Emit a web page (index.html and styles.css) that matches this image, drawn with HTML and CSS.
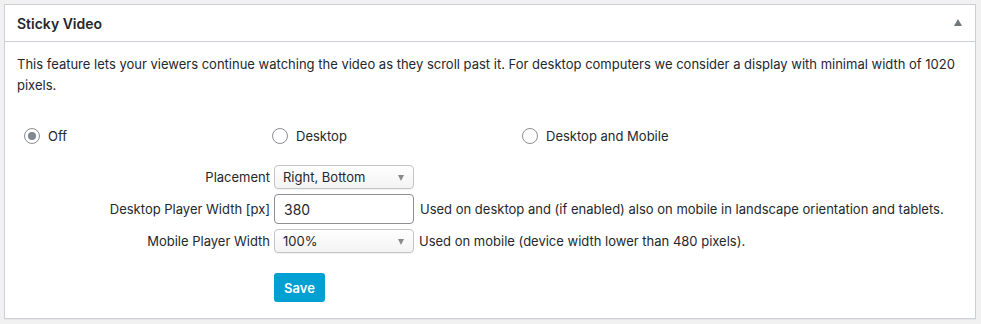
FILE: index.html
```html
<!DOCTYPE html>
<html>
<head>
<meta charset="utf-8">
<link rel="stylesheet" href="styles.css">
</head>
<body>
<div class="postbox">
  <div class="postbox-header">
    <h2 class="postbox-title">Sticky Video</h2>
    <span class="toggle-arrow"></span>
  </div>
  <div class="inside">
    <p class="intro">This feature lets your viewers continue watching the video as they scroll past it. For desktop computers we consider a display with minimal width of 1020 pixels.</p>
    <div class="radio-row">
      <label class="radio-opt"><span class="radio checked"></span>Off</label>
      <label class="radio-opt"><span class="radio"></span>Desktop</label>
      <label class="radio-opt"><span class="radio"></span>Desktop and Mobile</label>
    </div>
    <div class="form-grid">
      <span class="field-label">Placement</span>
      <span class="fake-select">Right, Bottom<span class="caret"></span></span>
      <span class="field-desc"></span>

      <span class="field-label">Desktop Player Width [px]</span>
      <span class="fake-input">380</span>
      <span class="field-desc desc-input">Used on desktop and (if enabled) also on mobile in landscape orientation and tablets.</span>

      <span class="field-label">Mobile Player Width</span>
      <span class="fake-select">100%<span class="caret"></span></span>
      <span class="field-desc">Used on mobile (device width lower than 480 pixels).</span>
    </div>
    <div class="actions">
      <button class="btn-save">Save</button>
    </div>
  </div>
</div>
</body>
</html>
```
FILE: styles.css
```css
html, body {
  margin: 0;
  padding: 0;
  background: #f1f1f1;
}
body {
  padding: 4px 5px 5px 4px;
  font-family: Inter, "Noto Sans", sans-serif;
  font-size: 13px;
  color: #23282d;
}
.postbox {
  background: #fff;
  border: 1px solid #ccd0d4;
  box-shadow: 0 1px 1px rgba(0,0,0,0.04);
  height: 315px;
  box-sizing: border-box;
}
.postbox-header {
  height: 36px;
  border-bottom: 1px solid #ccd0d4;
  display: flex;
  align-items: center;
  justify-content: space-between;
  padding: 0 13px 0 12px;
}
.postbox-title {
  margin: 0;
  font-size: 14px;
  font-weight: 600;
  color: #23282d;
}
.toggle-arrow {
  width: 0;
  height: 0;
  border-left: 4px solid transparent;
  border-right: 4px solid transparent;
  border-bottom: 7px solid #72777c;
  margin-top: -1px;
}
.inside {
  padding: 0 12px;
}
.intro {
  margin: 12px 0 0;
  line-height: 21px;
}
.radio-row {
  display: grid;
  grid-template-columns: 248px 250px auto;
  margin-top: 30px;
  padding-left: 7px;
}
.radio-opt {
  display: flex;
  align-items: center;
  gap: 8px;
  height: 20px;
}
.radio {
  width: 14px;
  height: 14px;
  border: 1px solid #8c8f94;
  border-radius: 50%;
  box-sizing: content-box;
  display: flex;
  align-items: center;
  justify-content: center;
  background: #fff;
}
.radio.checked::after {
  content: "";
  width: 8px;
  height: 8px;
  border-radius: 50%;
  background: #7e8993;
}
.form-grid {
  display: grid;
  grid-template-columns: 253px 140px auto;
  column-gap: 4px;
  row-gap: 5px;
  margin-top: 19px;
  align-items: center;
}
.field-label {
  text-align: right;
  white-space: nowrap;
}
.fake-select {
  position: relative;
  height: 24px;
  box-sizing: border-box;
  border: 1px solid #c3c4c7;
  border-radius: 4px;
  background: linear-gradient(#fff, #f3f3f3);
  box-shadow: 0 1px 1px rgba(0,0,0,0.06);
  display: flex;
  align-items: center;
  padding-left: 8px;
  font-size: 13px;
}
.caret {
  position: absolute;
  right: 9px;
  top: 9px;
  width: 0;
  height: 0;
  border-left: 3.5px solid transparent;
  border-right: 3.5px solid transparent;
  border-top: 6px solid #8a8a8a;
}
.fake-input {
  height: 30px;
  box-sizing: border-box;
  border: 1px solid #8c8f94;
  border-radius: 4px;
  background: #fff;
  display: flex;
  align-items: center;
  padding-left: 9px;
  font-size: 14px;
}
.field-desc {
  white-space: nowrap;
  padding-left: 1px;
}
.desc-input {
  padding-left: 2px;
}
.actions {
  margin-top: 20px;
  padding-left: 257px;
}
.btn-save {
  width: 51px;
  height: 29px;
  border: none;
  border-radius: 3px;
  background: #00a0d2;
  color: #fff;
  font-family: Inter, "Noto Sans", sans-serif;
  font-size: 13px;
  font-weight: 600;
  padding: 0;
}
```
